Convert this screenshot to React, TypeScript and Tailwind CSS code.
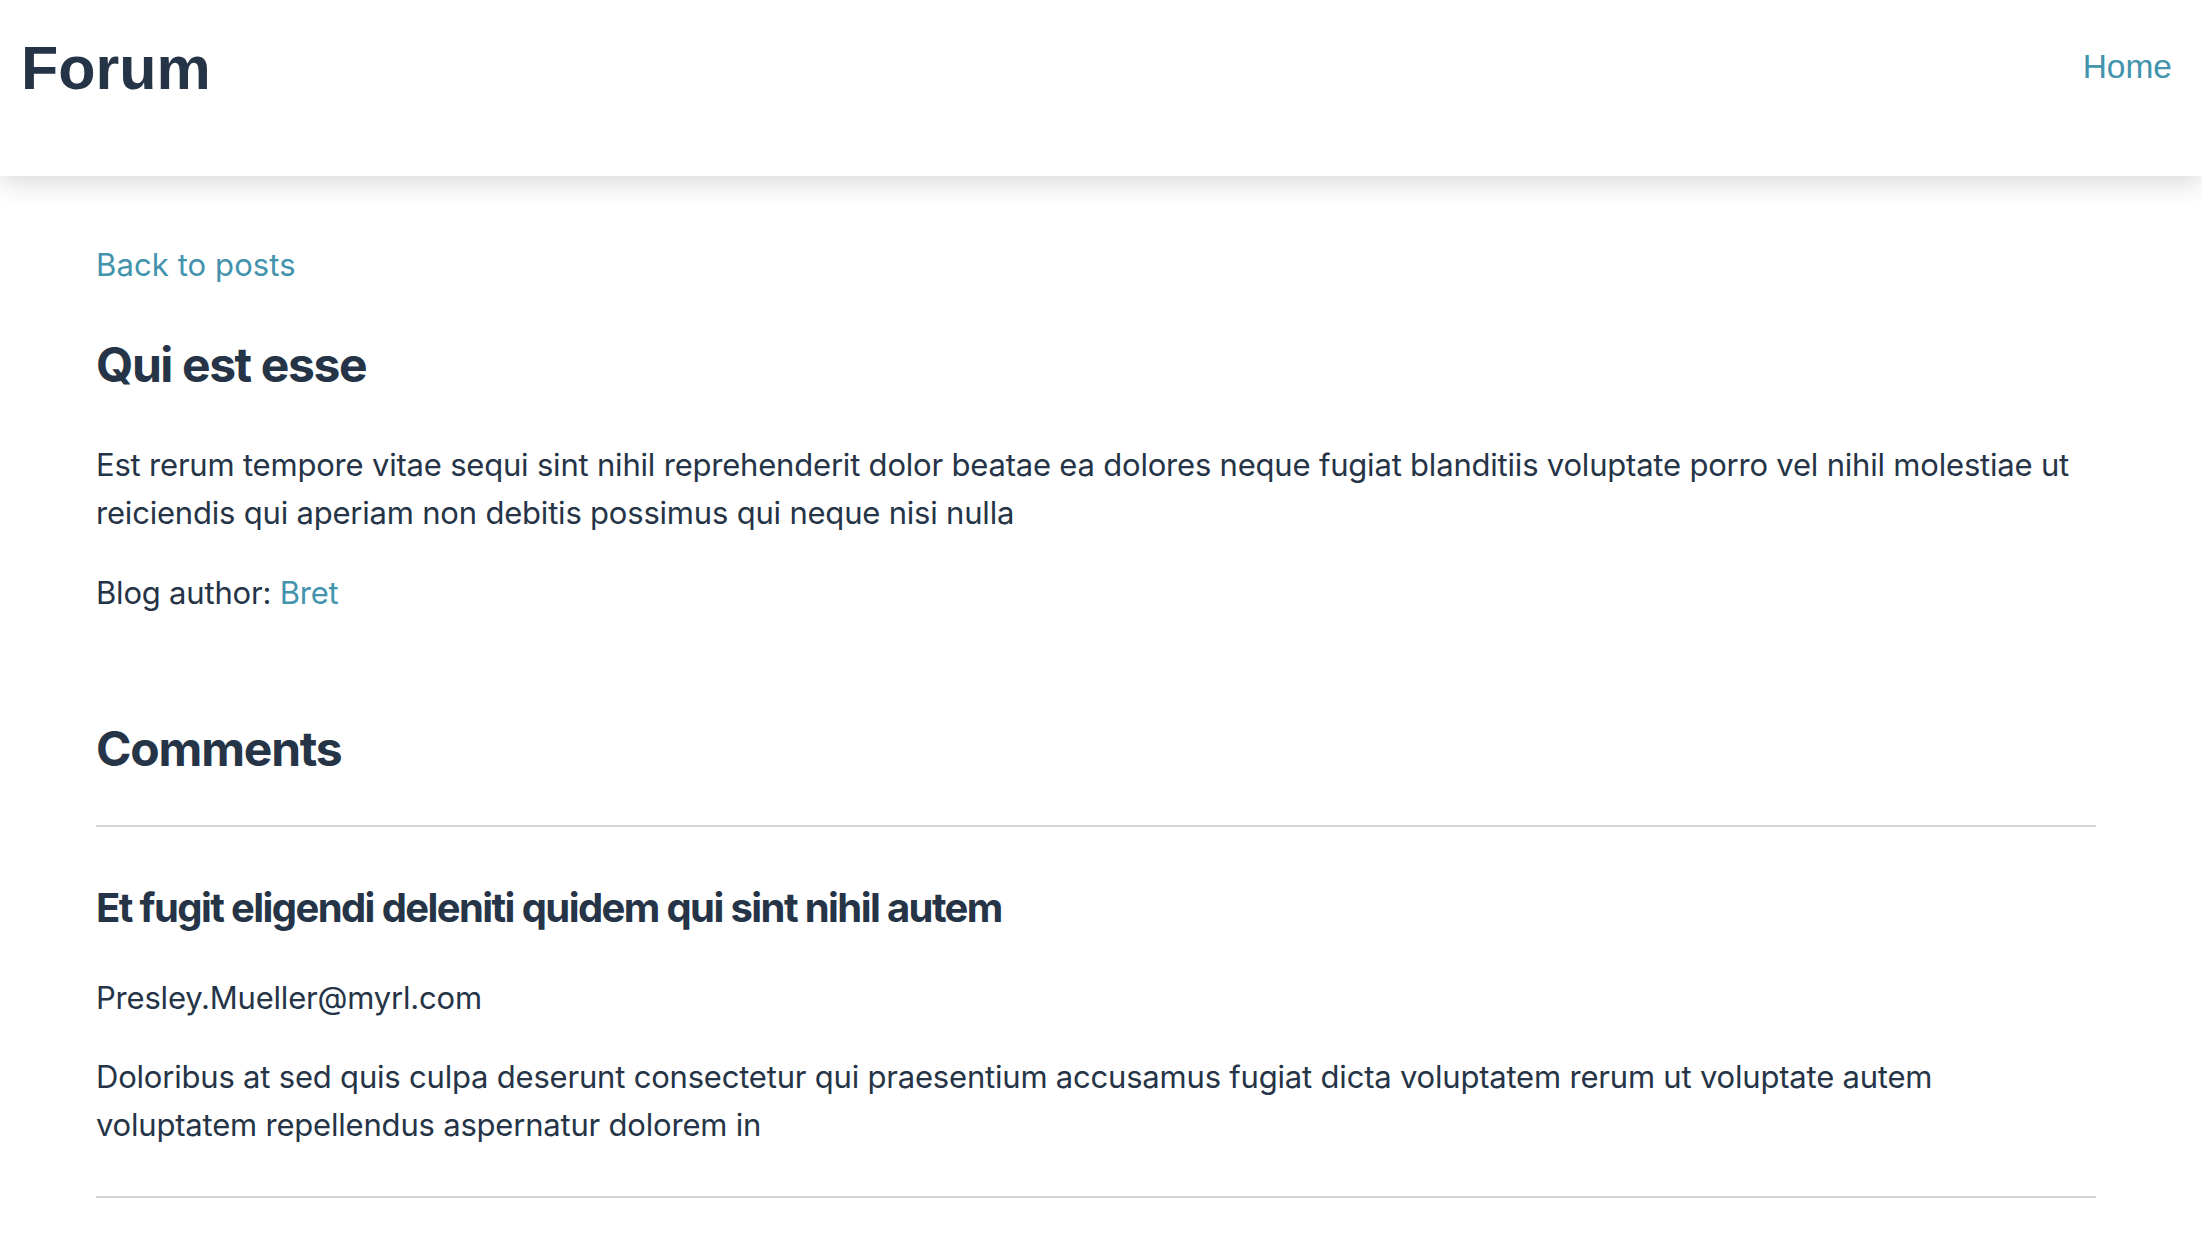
import React from 'react';

const post = {
  title: 'Qui est esse',
  body: 'Est rerum tempore vitae sequi sint nihil reprehenderit dolor beatae ea dolores neque fugiat blanditiis voluptate porro vel nihil molestiae ut reiciendis qui aperiam non debitis possimus qui neque nisi nulla',
  author: 'Bret',
};

const comments = [
  {
    id: 1,
    name: 'Et fugit eligendi deleniti quidem qui sint nihil autem',
    email: 'Presley.Mueller@myrl.com',
    body: 'Doloribus at sed quis culpa deserunt consectetur qui praesentium accusamus fugiat dicta voluptatem rerum ut voluptate autem voluptatem repellendus aspernatur dolorem in',
  },
];

export default function App() {
  return (
    <div className="min-h-screen bg-white text-[#253446] font-['Inter',sans-serif]">
      {/* Header */}
      <header className="flex justify-between items-start h-[176px] pl-[21px] pr-[30px] bg-white shadow-[0_6px_26px_rgba(0,0,0,0.16)]">
        <h1 className="mt-[38px] text-[61px] leading-[61px] font-bold font-['Liberation_Sans',Arial,sans-serif]">
          Forum
        </h1>
        <a href="#" className="mt-[43px] text-[33.5px] leading-[48px] text-[#4393ad] font-['Liberation_Sans',Arial,sans-serif]">
          Home
        </a>
      </header>

      <main className="px-[96px] text-[31px] leading-[48px] tracking-[-0.2px]">
        <div className="max-w-[2000px]">
          <div className="pt-[65px]">
            <a href="#" className="text-[#4393ad] tracking-[0.1px]">
              Back to posts
            </a>
          </div>

          <h2 className="mt-[48px] text-[48px] leading-[56px] font-bold tracking-[-1.4px]">{post.title}</h2>
          <p className="mt-[48px]">{post.body}</p>
          <p className="mt-[32px]">
            Blog author: <a href="#" className="text-[#4393ad]">{post.author}</a>
          </p>

          {/* Comments */}
          <h2 className="mt-[104px] text-[48px] leading-[56px] font-bold tracking-[-1.2px]">Comments</h2>
          <hr className="mt-[48px] border-0 border-t-2 border-[#d4d4d4]" />
          {comments.map((c) => (
            <div key={c.id}>
              <h3 className="mt-[57px] text-[40px] leading-[48px] font-bold tracking-[-1.6px]">{c.name}</h3>
              <p className="mt-[42px]">{c.email}</p>
              <p className="mt-[31px]">{c.body}</p>
              <hr className="mt-[47px] border-0 border-t-2 border-[#d4d4d4]" />
            </div>
          ))}
        </div>
      </main>
    </div>
  );
}
